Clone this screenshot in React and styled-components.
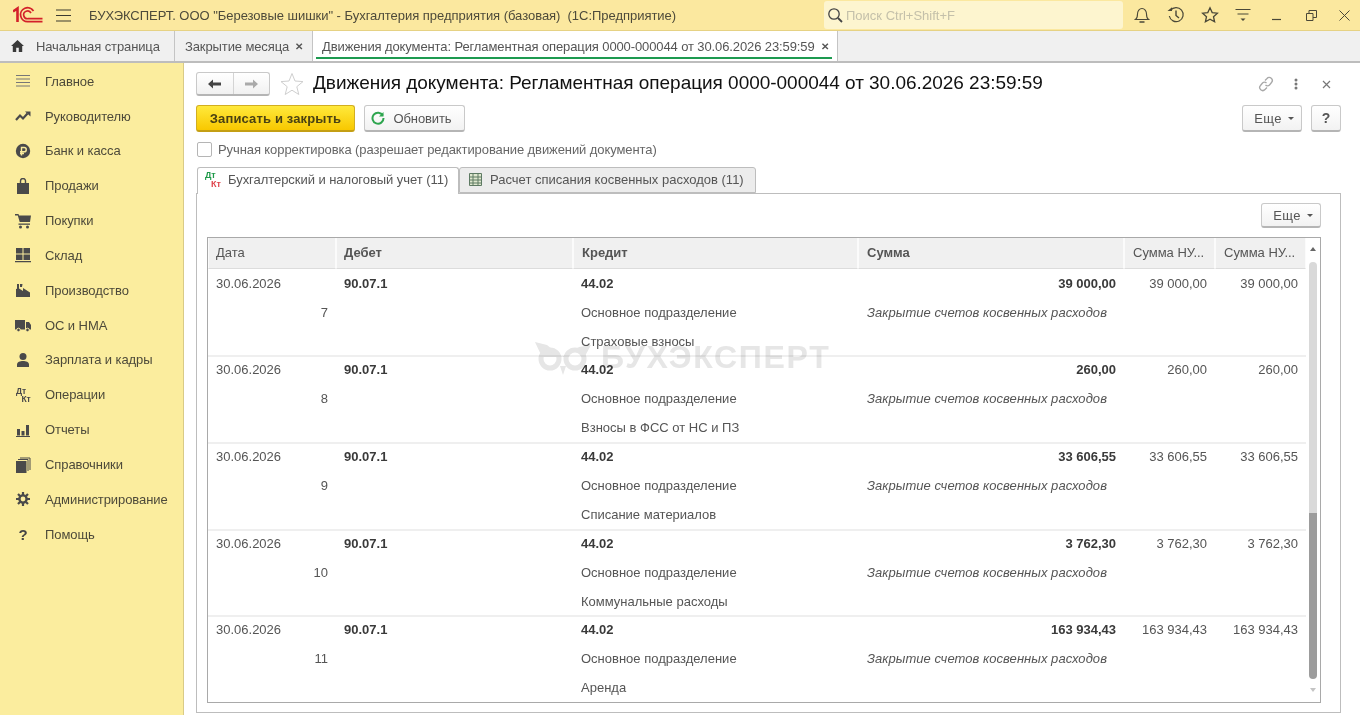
import React from "react";
import styled, { createGlobalStyle } from "styled-components";

const GlobalStyle = createGlobalStyle`
    html, body {
        margin: 0;
        padding: 0;
        background: white;
    }
    * {
        box-sizing: border-box;
    }
`;

const Page = styled.div`
    width: 1360px;
    height: 715px;
    overflow: hidden;
    display: flex;
    flex-direction: column;
    font-family: "Liberation Sans", Arial, sans-serif;
    font-size: 13px;
    color: #4a4a4a;
`;

const TitleBar = styled.div`
    height: 31px;
    flex: none;
    display: flex;
    align-items: center;
    background: #fbe89f;
    border-bottom: 1px solid #e6d284;
    overflow: hidden;
`;

const Logo = styled.svg`
    width: 30px;
    height: 18px;
    flex: none;
    margin-left: 13px;
`;

const Burger = styled.svg`
    width: 15px;
    height: 13px;
    flex: none;
    margin-left: 13px;
`;

const AppName = styled.div`
    margin-left: 18px;
    width: 639px;
    flex: none;
    color: #4d4a3a;
    white-space: pre;
    letter-spacing: -0.03px;
`;

const Search = styled.div`
    width: 299px;
    height: 28px;
    flex: none;
    margin-left: 96px;
    padding-left: 3px;
    display: flex;
    align-items: center;
    gap: 3px;
    background: #fdf5cf;
    border-radius: 3px;
    color: #c4c0aa;
`;

const TopIcons = styled.div`
    margin-left: 2px;
    flex: none;
    display: flex;
    align-items: center;
`;

const TopIcon = styled.div`
    width: 33.83px;
    height: 30px;
    display: flex;
    align-items: center;
    justify-content: center;
`;

const TabBar = styled.div`
    height: 32px;
    flex: none;
    display: flex;
    background: #f0f0f0;
    border-bottom: 2px solid #bdbdbd;
`;

const PageTab = styled.div`
    height: 30px;
    flex: none;
    width: ${(p) => p.$width}px;
    display: flex;
    align-items: center;
    position: relative;
    padding-left: ${(p) => p.$pad}px;
    border-right: 1px solid #c4c4c4;
    background: ${(p) => (p.$active ? "white" : "#f0f0f0")};
    white-space: nowrap;
    color: #555;
    letter-spacing: -0.11px;
`;

const ActiveLine = styled.div`
    position: absolute;
    left: 3px;
    right: 5px;
    bottom: 2px;
    height: 2px;
    background: #1d9a50;
`;

const TabClose = styled.span`
    font-size: 10px;
    font-weight: bold;
    color: #555;
    margin-left: 6px;
`;

const HomeIcon = styled.svg`
    position: absolute;
    left: 11px;
    top: 9px;
    width: 13px;
    height: 12px;
`;

const Body = styled.div`
    flex: 1;
    min-height: 0;
    display: flex;
`;

const Sidebar = styled.div`
    width: 184px;
    flex: none;
    padding-top: 0.825px;
    background: #fbed9e;
    border-right: 1px solid #d9cb87;
`;

const SideItem = styled.div`
    height: 34.85px;
    display: flex;
    align-items: center;
    color: #4d4a3a;
    letter-spacing: -0.08px;
`;

const SideIcon = styled.div`
    width: 45px;
    flex: none;
    display: flex;
    justify-content: center;
    color: #4a4a4a;
    padding-left: 1px;
`;

const Main = styled.div`
    flex: 1;
    min-width: 0;
    padding: 9px 19px 0 12px;
    position: relative;
`;

const HeaderRow = styled.div`
    height: 24px;
    display: flex;
    align-items: center;
`;

const NavGroup = styled.div`
    width: 74px;
    height: 24px;
    display: flex;
    border: 1px solid #c9c9c9;
    border-bottom: 2px solid #b5b5b5;
    border-radius: 3px;
    background: linear-gradient(to bottom, #ffffff, #f1f1f1);
`;

const NavButton = styled.div`
    flex: 1;
    display: flex;
    align-items: center;
    justify-content: center;
    border-left: ${(p) => (p.$divider ? "1px solid #d4d4d4" : "none")};
`;

const Star = styled.svg`
    width: 24px;
    height: 24px;
    margin-left: 10px;
`;

const Title = styled.h1`
    margin: -2px 0 0 9px;
    flex: 1;
    font-size: 19px;
    font-weight: normal;
    color: #111;
    white-space: nowrap;
    letter-spacing: -0.03px;
`;

const HeaderTools = styled.div`
    display: flex;
    align-items: center;
    color: #9a9a9a;
`;

const ToolSlot = styled.div`
    width: 30px;
    display: flex;
    justify-content: center;
`;

const CommandRow = styled.div`
    margin-top: 9px;
    height: 27px;
    display: flex;
    align-items: stretch;
`;

const Button = styled.div`
    width: ${(p) => p.$width}px;
    margin-left: ${(p) => p.$left || 0}px;
    flex: none;
    display: flex;
    align-items: center;
    justify-content: center;
    gap: ${(p) => p.$gap || 0}px;
    padding-left: ${(p) => p.$padLeft || 0}px;
    padding-right: ${(p) => p.$padRight || 0}px;
    border: 1px solid #c9c9c9;
    border-bottom: 2px solid #b5b5b5;
    border-radius: 3px;
    background: linear-gradient(to bottom, #ffffff, #f2f2f2);
    color: #555;
    font-size: ${(p) => p.$size || 13}px;
    letter-spacing: ${(p) => p.$spacing || 0}px;
`;

const PrimaryButton = styled(Button)`
    background: linear-gradient(to bottom, #ffe93c, #f8c800);
    border: 1px solid #d2ae20;
    border-bottom: 2px solid #c49f14;
    color: #4a4213;
    font-weight: bold;
    letter-spacing: 0.15px;
`;

const Spacer = styled.div`
    flex: 1;
`;

const Caret = styled.span`
    width: 0;
    height: 0;
    margin-left: 6px;
    border-left: 3px solid transparent;
    border-right: 3px solid transparent;
    border-top: 3px solid #555;
`;

const CheckRow = styled.div`
    margin-top: 9px;
    height: 16px;
    display: flex;
    align-items: center;
    gap: 6px;
    padding-left: 1px;
    color: #666;
    letter-spacing: -0.09px;
`;

const CheckBox = styled.div`
    width: 15px;
    height: 15px;
    border: 1px solid #b5b5b5;
    border-radius: 2px;
    background: white;
`;

const FormTabs = styled.div`
    margin-top: 10px;
    height: 27px;
    display: flex;
    padding-left: 1px;
    position: relative;
    z-index: 1;
`;

const FormTab = styled.div`
    width: ${(p) => p.$width}px;
    height: ${(p) => (p.$active ? 27 : 26)}px;
    padding: 0 0 ${(p) => (p.$active ? 4 : 2)}px ${(p) => (p.$active ? 7 : 9)}px;
    display: flex;
    align-items: center;
    gap: ${(p) => (p.$active ? 6 : 8)}px;
    background: ${(p) => (p.$active ? "white" : "#ececec")};
    border: 1px solid #bdbdbd;
    border-bottom: ${(p) => (p.$active ? "none" : "1px solid #bdbdbd")};
    border-radius: 3px 3px 0 0;
    color: #555;
    letter-spacing: ${(p) => (p.$active ? "-0.05px" : "0")};
`;

const Panel = styled.div`
    margin-top: -1px;
    height: 520px;
    padding: 9px 19px 0 10px;
    border: 1px solid #bdbdbd;
`;

const PanelTools = styled.div`
    height: 25px;
    display: flex;
    justify-content: flex-end;
`;

const TableFrame = styled.div`
    margin-top: 9px;
    height: 466px;
    display: flex;
    border: 1px solid #a9a9a9;
    position: relative;
`;

const TableBody = styled.div`
    width: 1098px;
    flex: none;
`;

const columns = "128px 237px 285px 266px 91px 91px";

const HeadRow = styled.div`
    height: 31px;
    display: grid;
    grid-template-columns: ${columns};
`;

const HeadCell = styled.div`
    display: flex;
    align-items: center;
    padding: 0 0 2px ${(p) => p.$pad || 8}px;
    background: #f0f0f0;
    border-right: 1px solid #fbfbfb;
    border-left: 1px solid #fbfbfb;
    border-bottom: 1px solid #dcdcdc;
    font-weight: ${(p) => (p.$bold ? "bold" : "normal")};
    color: #555;
    white-space: nowrap;
    overflow: hidden;
`;

const DataRow = styled.div`
    height: ${(p) => p.$height}px;
    display: grid;
    grid-template-columns: ${columns};
    box-shadow: ${(p) => (p.$first ? "none" : "inset 0 2px 0 #efefef")};
`;

const Column = styled.div`
    display: flex;
    flex-direction: column;
`;

const Line = styled.div`
    height: 29px;
    padding: 0 8px;
    display: flex;
    align-items: center;
    justify-content: ${(p) => (p.$right ? "flex-end" : "flex-start")};
    font-weight: ${(p) => (p.$bold ? "bold" : "normal")};
    color: ${(p) => (p.$bold ? "#3a3a3a" : "#555")};
    white-space: nowrap;
`;

const Note = styled(Line)`
    padding-left: 9px;
    font-style: italic;
    letter-spacing: 0.05px;
`;

const ScrollTrack = styled.div`
    width: 14px;
    flex: none;
    display: flex;
    flex-direction: column;
    align-items: center;
`;

const ScrollArrow = styled.div`
    flex: none;
    width: 0;
    height: 0;
    margin-top: 9px;
    border-left: 3px solid transparent;
    border-right: 3px solid transparent;
    border-bottom: ${(p) => (p.$down ? "0" : "4px solid #666")};
    border-top: ${(p) => (p.$down ? "4px solid #c4c4c4" : "0")};
`;

const ThumbLight = styled.div`
    width: 8px;
    height: 251px;
    margin-top: 11px;
    background: #d9d9d9;
    border-radius: 4px 4px 0 0;
`;

const ThumbDark = styled.div`
    width: 8px;
    height: 166px;
    background: #9c9c9c;
    border-radius: 0 0 4px 4px;
`;

const Watermark = styled.div`
    position: absolute;
    left: 325px;
    top: 104px;
    display: flex;
    align-items: center;
    gap: 8px;
    font-size: 32px;
    font-weight: bold;
    letter-spacing: 1.7px;
    color: #e6e6e6;
    pointer-events: none;
    mix-blend-mode: multiply;
`;

const WatermarkText = styled.span`
    margin-top: -3px;
`;

const ic = { width: 16, height: 16, viewBox: "0 0 16 16", fill: "currentColor" };

const sideItems = [
    ["Главное", <svg {...ic}><path d="M1 2h14v1H1zM1 5.500h14v1H1zM1 9h14v1H1zM1 12.500h14v1H1z" fill="#777" /></svg>],
    ["Руководителю", <svg {...ic}><path d="M1 12l4-4.500 3 3 4.500-5" fill="none" stroke="currentColor" strokeWidth="2.200" /><path d="M10 3.500h5.500v5z" /></svg>],
    ["Банк и касса", <svg {...ic}><circle cx="8" cy="8" r="7.200" /><path d="M6.500 12.500V4.500h2.600a2.100 2.100 0 010 4.300H5M5 10.500h4" fill="none" stroke="#fbed9e" strokeWidth="1.400" /></svg>],
    ["Продажи", <svg {...ic}><path d="M2 5h12v11H2z" /><path d="M5.500 7V3a2.500 2.500 0 015 0v4" fill="none" stroke="currentColor" strokeWidth="1.400" /></svg>],
    ["Покупки", <svg {...ic}><path d="M0 1h3.500l.5 1.500H16l-1 6.500H4.700L2.800 2.500H0z" /><path d="M3.500 10.500h11.500v1.300H3.500z" /><circle cx="5.500" cy="14" r="1.500" /><circle cx="12.500" cy="14" r="1.500" /></svg>],
    ["Склад", <svg {...ic}><path d="M1 1h6.500v5.500H1zM8.500 1H15v5.500H8.500zM1 7.500h6.500V13H1zM8.500 7.500H15V13H8.500zM0 14h16v1.300H0z" /></svg>],
    ["Производство", <svg {...ic}><path d="M1 15V7l1-.2V2h2v4.500L8 9V6l7 4.500V15zM5 2h2.500L7 5H5z" /></svg>],
    ["ОС и НМА", <svg {...ic}><path d="M0 3h10v9.500H0zM11 5h3l2 3v4.500h-5z" /><circle cx="3.500" cy="13" r="1.800" stroke="#fbed9e" /><circle cx="12.500" cy="13" r="1.800" stroke="#fbed9e" /></svg>],
    ["Зарплата и кадры", <svg {...ic}><circle cx="8" cy="4.500" r="3.500" /><path d="M2 15v-2.500C2 10 5 9 8 9s6 1 6 3.500V15z" /></svg>],
    ["Операции", <svg {...ic}><text x="1" y="7" fontSize="8.500" fontWeight="bold" fontFamily="Liberation Sans">Дт</text><text x="6.500" y="15" fontSize="8.500" fontWeight="bold" fontFamily="Liberation Sans">Кт</text></svg>],
    ["Отчеты", <svg {...ic}><path d="M2 7h3v6.500H2zM6.500 9h3v4.500h-3zM11 3h3v10.500h-3zM1 14h14v1H1z" /></svg>],
    ["Справочники", <svg {...ic}><path d="M1 4h10.500v12H1z" /><path d="M3 2.500h10V14M5 1h10v12" fill="none" stroke="currentColor" /></svg>],
    ["Администрирование", <svg {...ic} fill="none" stroke="currentColor"><circle cx="8" cy="8" r="3.600" strokeWidth="2.400" /><path d="M8 1v3M8 12v3M1 8h3M12 8h3M3 3l2 2M11 11l2 2M13 3l-2 2M5 11l-2 2" strokeWidth="2.200" /></svg>],
    ["Помощь", <span style={{ fontSize: 15, fontWeight: "bold", color: "#444" }}>?</span>],
];

// heights differ by a pixel: the original grid snaps its rows unevenly
const rows = [
    { n: 7, h: 86, sum: "39 000,00", item: "Страховые взносы" },
    { n: 8, h: 87, sum: "260,00", item: "Взносы в ФСС от НС и ПЗ" },
    { n: 9, h: 87, sum: "33 606,55", item: "Списание материалов" },
    { n: 10, h: 86, sum: "3 762,30", item: "Коммунальные расходы" },
    { n: 11, h: 87, sum: "163 934,43", item: "Аренда" },
];

function DtKt() {
    // the little green/red debit-credit mark on the first tab
    return (
        <svg width="17" height="17" viewBox="0 0 17 17">
            <text x="0" y="7" fontSize="9" fontWeight="bold" fontFamily="Liberation Sans" fill="#1f9a4a">Дт</text>
            <text x="6" y="15.500" fontSize="9" fontWeight="bold" fontFamily="Liberation Sans" fill="#e0464e">Кт</text>
        </svg>
    );
}

function App() {
    return (
        <Page>
            <GlobalStyle />
            <TitleBar>
                <Logo viewBox="0 0 30 18">
                    <g fill="none" stroke="#d3202a">
                        <path d="M0 5.500l4.500-3V16" strokeWidth="2.600" />
                        <path d="M20.500 5A7 7 0 1 0 15 15.700H29.500" strokeWidth="1.700" />
                        <path d="M18 7A3.900 3.900 0 1 0 15 12.700H29.500" strokeWidth="1.700" />
                    </g>
                </Logo>
                <Burger viewBox="0 0 15 13">
                    <path d="M0 1h15M0 6.500h15M0 12h15" stroke="#3c3a30" strokeWidth="1.200" />
                </Burger>
                <AppName>БУХЭКСПЕРТ. ООО "Березовые шишки" - Бухгалтерия предприятия (базовая)  (1С:Предприятие)</AppName>
                <Search>
                    <svg width="16" height="16" viewBox="0 0 16 16" fill="none" stroke="#444" strokeWidth="1.300">
                        <circle cx="7" cy="7" r="5.200" />
                        <path d="M11 11l4 4" strokeWidth="1.800" />
                    </svg>
                    Поиск Ctrl+Shift+F
                </Search>
                <TopIcons>
                    <TopIcon>
                        <svg width="16" height="18" viewBox="0 0 16 18" fill="none" stroke="#4a4838" strokeWidth="1.100">
                            <path d="M1.500 13.500c1.500-1 2-3 2-5.500C3.500 5 5.500 2.500 8 2.500s4.500 2.500 4.500 5.500c0 2.500.5 4.500 2 5.500z" />
                            <path d="M5.500 16h5" strokeWidth="1.500" />
                        </svg>
                    </TopIcon>
                    <TopIcon>
                        <svg width="18" height="18" viewBox="0 0 18 18" fill="none" stroke="#4a4838" strokeWidth="1.200">
                            <path d="M3.500 4.500A7 7 0 1 1 2.300 10" />
                            <path d="M.5 5h4.500V1.200z" fill="#4a4838" stroke="none" />
                            <path d="M9 4.500v5l3 2.500" strokeWidth="1.400" />
                        </svg>
                    </TopIcon>
                    <TopIcon>
                        <svg width="18" height="18" viewBox="0 0 18 18" fill="none" stroke="#4a4838" strokeWidth="1.300">
                            <path d="M9 1.800l2.200 4.800 5.200.6-3.900 3.500 1.100 5.100L9 13.200l-4.600 2.600 1.100-5.100L1.600 7.200l5.200-.6z" />
                        </svg>
                    </TopIcon>
                    <TopIcon>
                        <svg width="16" height="16" viewBox="0 0 16 16" stroke="#4a4838" strokeWidth="1.100" fill="none">
                            <path d="M.5 2.500h15M2.500 7h11" />
                            <path d="M5.500 11.500h5L8 14z" fill="#4a4838" stroke="none" />
                        </svg>
                    </TopIcon>
                    <TopIcon>
                        <svg width="10" height="16" viewBox="0 0 10 16"><path d="M0 12.500h9" stroke="#4a4838" strokeWidth="1.200" /></svg>
                    </TopIcon>
                    <TopIcon>
                        <svg width="11" height="11" viewBox="0 0 11 11" fill="none" stroke="#4a4838">
                            <path d="M.5 3.500h6.500v7H.5zM3 3.500V.5h7.500v7H7" />
                        </svg>
                    </TopIcon>
                    <TopIcon>
                        <svg width="11" height="11" viewBox="0 0 11 11" stroke="#4a4838"><path d="M.5.500l10 10M10.500.500l-10 10" /></svg>
                    </TopIcon>
                </TopIcons>
            </TitleBar>
            <TabBar>
                <PageTab $width={175} $pad={36}>
                    <HomeIcon viewBox="0 0 15 14"><path d="M7.500 0L0 7h2v7h4V9h3v5h4V7h2z" fill="#3a3a3a" /></HomeIcon>
                    Начальная страница
                </PageTab>
                <PageTab $width={138} $pad={10}>
                    Закрытие месяца<TabClose>✕</TabClose>
                </PageTab>
                <PageTab $width={525} $pad={9} $active>
                    Движения документа: Регламентная операция 0000-000044 от 30.06.2026 23:59:59<TabClose>✕</TabClose>
                    <ActiveLine />
                </PageTab>
            </TabBar>
            <Body>
                <Sidebar>
                    {sideItems.map(([label, icon]) => (
                        <SideItem key={label}>
                            <SideIcon>{icon}</SideIcon>
                            {label}
                        </SideItem>
                    ))}
                </Sidebar>
                <Main>
                    <HeaderRow>
                        <NavGroup>
                            <NavButton>
                                <svg width="13" height="10" viewBox="0 0 13 10"><path d="M0 5l5-4.500v3h8v3H5v3z" fill="#444" /></svg>
                            </NavButton>
                            <NavButton $divider>
                                <svg width="13" height="10" viewBox="0 0 13 10"><path d="M13 5L8 .5v3H0v3h8v3z" fill="#aaa" /></svg>
                            </NavButton>
                        </NavGroup>
                        <Star viewBox="0 0 24 24">
                            <path d="M12 1.500l3 7.500 8 .6-6.200 5.100 2 7.800L12 18.200l-6.800 4.300 2-7.800L1 9.600l8-.6z" fill="white" stroke="#cfcfcf" />
                        </Star>
                        <Title>Движения документа: Регламентная операция 0000-000044 от 30.06.2026 23:59:59</Title>
                        <HeaderTools>
                            <ToolSlot>
                                <svg width="16" height="16" viewBox="0 0 16 16" fill="none" stroke="#a8a8a8" strokeWidth="1.300">
                                    <path d="M7 4.500l2-2a2.800 2.800 0 0 1 4.500 4l-2 2.500a2.800 2.800 0 0 1-4 0" />
                                    <path d="M9 11.500l-2 2a2.800 2.800 0 0 1-4.500-4l2-2.500a2.800 2.800 0 0 1 4 0" />
                                </svg>
                            </ToolSlot>
                            <ToolSlot>
                                <svg width="4" height="12" viewBox="0 0 4 12" fill="#777"><circle cx="2" cy="2" r="1.500" /><circle cx="2" cy="6" r="1.500" /><circle cx="2" cy="10" r="1.500" /></svg>
                            </ToolSlot>
                            <ToolSlot>
                                <svg width="9" height="9" viewBox="0 0 9 9" stroke="#777" strokeWidth="1.200"><path d="M1 1l7 7M8 1L1 8" /></svg>
                            </ToolSlot>
                        </HeaderTools>
                    </HeaderRow>
                    <CommandRow>
                        <PrimaryButton $width={159}>Записать и закрыть</PrimaryButton>
                        <Button $width={101} $left={9} $gap={8} $padRight={6} $spacing={-0.1}>
                            <svg width="14" height="14" viewBox="0 0 14 14" fill="none" stroke="#2da54e" strokeWidth="2">
                                <path d="M11.800 4.500A5.500 5.500 0 1 0 12.500 7" />
                                <path d="M12.500 1v4.500H8" fill="#2da54e" stroke="none" />
                            </svg>
                            Обновить
                        </Button>
                        <Spacer />
                        <Button $width={60} $padLeft={4} $spacing={0.4}>Еще<Caret /></Button>
                        <Button $width={30} $left={9} $size={14}><b>?</b></Button>
                    </CommandRow>
                    <CheckRow>
                        <CheckBox />
                        Ручная корректировка (разрешает редактирование движений документа)
                    </CheckRow>
                    <FormTabs>
                        <FormTab $width={262} $active>
                            <DtKt />
                            Бухгалтерский и налоговый учет (11)
                        </FormTab>
                        <FormTab $width={297}>
                            <svg width="13" height="13" viewBox="0 0 13 13" fill="#dfe8cf" stroke="#5e7a63">
                                <path d="M.5.500h12v12H.5zM.5 4h12M.5 7h12M.5 10h12M4 .5v12M9 .5v12" />
                            </svg>
                            Расчет списания косвенных расходов (11)
                        </FormTab>
                    </FormTabs>
                    <Panel>
                        <PanelTools>
                            <Button $width={60} $padLeft={4} $spacing={0.4}>Еще<Caret /></Button>
                        </PanelTools>
                        <TableFrame>
                            <TableBody>
                                <HeadRow>
                                    <HeadCell $pad={7}>Дата</HeadCell>
                                    <HeadCell $pad={7} $bold>Дебет</HeadCell>
                                    <HeadCell $bold>Кредит</HeadCell>
                                    <HeadCell $bold>Сумма</HeadCell>
                                    <HeadCell>Сумма НУ...</HeadCell>
                                    <HeadCell>Сумма НУ...</HeadCell>
                                </HeadRow>
                                {rows.map((row, i) => (
                                    <DataRow key={row.n} $height={row.h} $first={i === 0}>
                                        <Column>
                                            <Line>30.06.2026</Line>
                                            <Line $right>{row.n}</Line>
                                        </Column>
                                        <Column>
                                            <Line $bold>90.07.1</Line>
                                        </Column>
                                        <Column>
                                            <Line $bold>44.02</Line>
                                            <Line>Основное подразделение</Line>
                                            <Line>{row.item}</Line>
                                        </Column>
                                        <Column>
                                            <Line $bold $right>{row.sum}</Line>
                                            <Note>Закрытие счетов косвенных расходов</Note>
                                        </Column>
                                        <Column>
                                            <Line $right>{row.sum}</Line>
                                        </Column>
                                        <Column>
                                            <Line $right>{row.sum}</Line>
                                        </Column>
                                    </DataRow>
                                ))}
                            </TableBody>
                            <ScrollTrack>
                                <ScrollArrow />
                                <ThumbLight />
                                <ThumbDark />
                                <ScrollArrow $down />
                            </ScrollTrack>
                            <Watermark>
                                <svg width="60" height="34" viewBox="0 0 60 34" fill="#e6e6e6">
                                    <path d="M2 0l12 3 15 12H9z" />
                                    <path d="M29 15L46 5l12-2-6 11z" />
                                    <path d="M27 24h6l-3 9z" />
                                    <circle cx="17" cy="17" r="9" fill="none" stroke="#e6e6e6" strokeWidth="5" />
                                    <circle cx="42" cy="17" r="9" fill="white" stroke="#e6e6e6" strokeWidth="5" />
                                </svg>
                                <WatermarkText>БУХЭКСПЕРТ</WatermarkText>
                            </Watermark>
                        </TableFrame>
                    </Panel>
                </Main>
            </Body>
        </Page>
    );
}

export default App;
